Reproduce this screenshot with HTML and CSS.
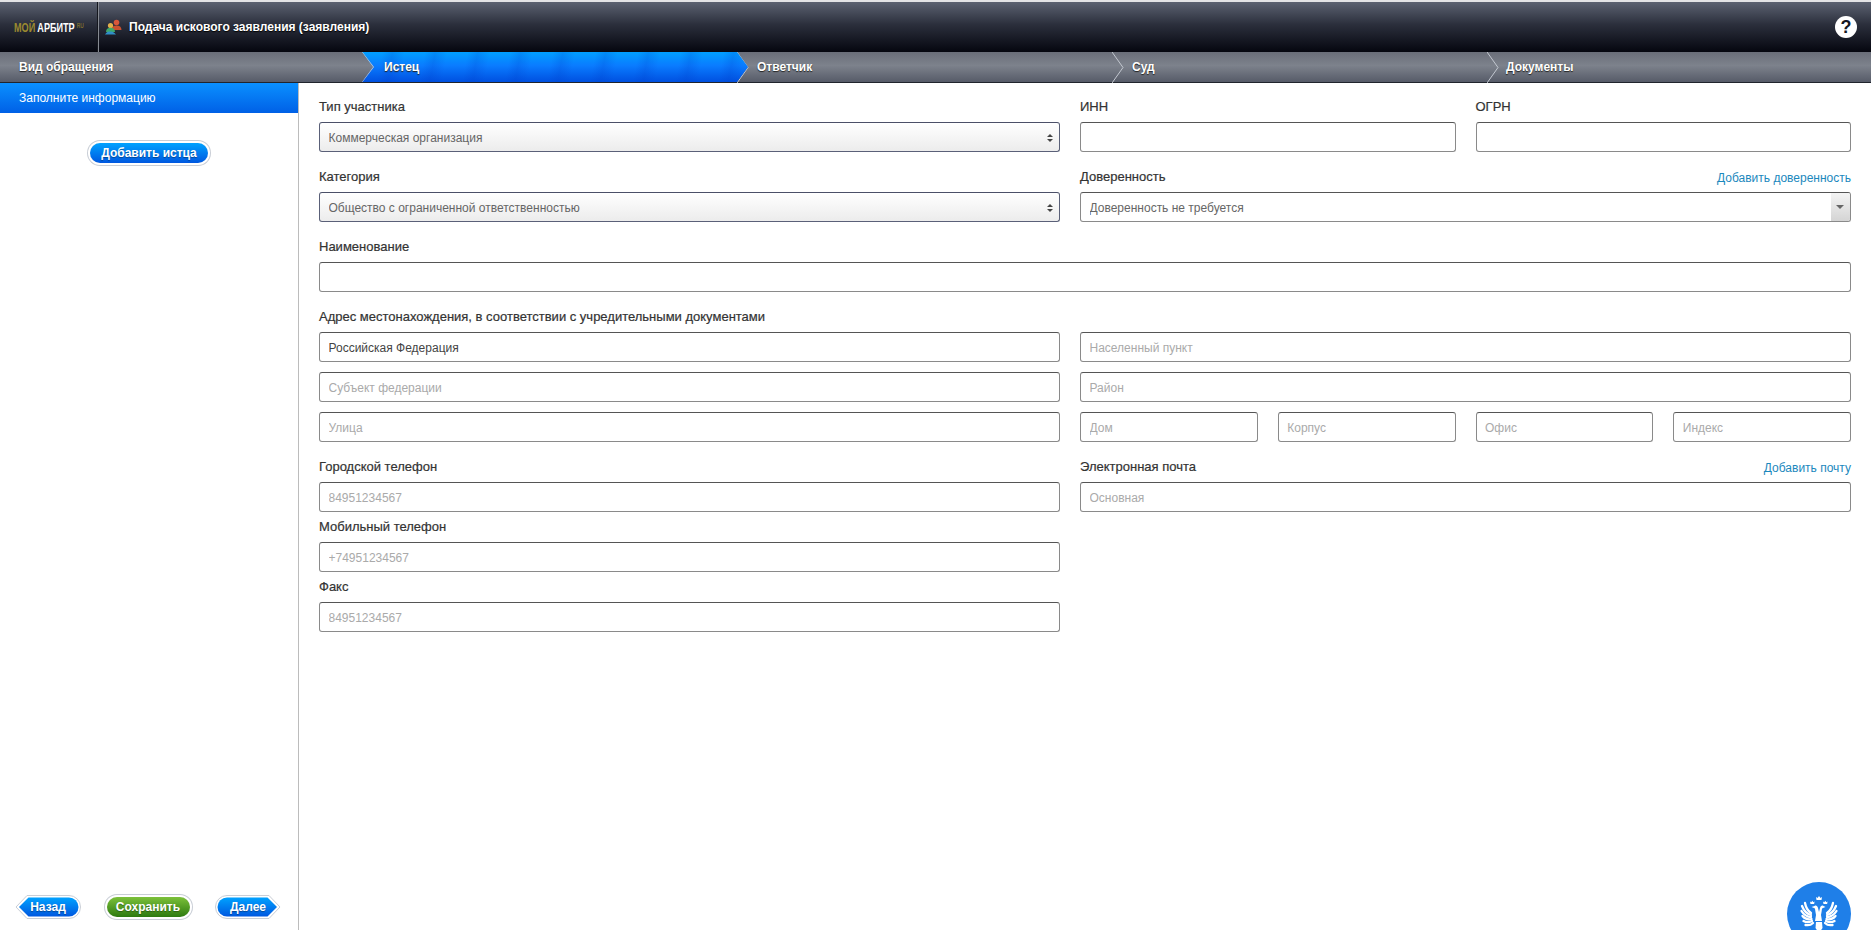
FILE: index.html
```html
<!DOCTYPE html>
<html lang="ru">
<head>
<meta charset="utf-8">
<title>Мой Арбитр</title>
<link rel="stylesheet" href="styles.css">
</head>
<body>
<div class="app">
  <header class="topbar">
    <div class="logo"><div class="logo-text"><span class="logo-gold">МОЙ</span><span class="logo-white">АРБИТР</span><span class="logo-ru">RU</span></div></div>
    <div class="title">
      <svg class="title-icon" width="17" height="16" viewBox="0 0 17 16">
        <circle cx="11.500" cy="3.500" r="2.800" fill="#d9573a"/>
        <path d="M6.500 11c0-3.200 2-4.600 5-4.600s5 1.400 5 4.600z" fill="#c9502f"/>
        <circle cx="5.500" cy="6.500" r="2.600" fill="#e2b04a"/>
        <path d="M1 13c0-2.800 1.800-4.200 4.500-4.200S10 10.200 10 13z" fill="#3fa86a"/>
        <path d="M0 15.500c1.500-2.500 3-3 5-3s4 .5 6 3z" fill="#2f8fc8"/>
      </svg>
      <span>Подача искового заявления (заявления)</span>
    </div>
    <div class="help">?</div>
  </header>

  <nav class="steps">
    <div class="step step-first"><span>Вид обращения</span></div>
    <div class="step step-active">
      <span>Истец</span>
    </div>
    <div class="step">
      <svg class="chevron" width="12" height="31" viewBox="0 0 12 31"><path d="M0 0 L11 15.500 L0 31" fill="none" stroke="#c3c8d0" stroke-width="1"/></svg>
      <span>Ответчик</span>
    </div>
    <div class="step">
      <svg class="chevron" width="12" height="31" viewBox="0 0 12 31"><path d="M0 0 L11 15.500 L0 31" fill="none" stroke="#c3c8d0" stroke-width="1"/></svg>
      <span>Суд</span>
    </div>
    <div class="step step-last">
      <svg class="chevron" width="12" height="31" viewBox="0 0 12 31"><path d="M0 0 L11 15.500 L0 31" fill="none" stroke="#c3c8d0" stroke-width="1"/></svg>
      <span>Документы</span>
    </div>
  </nav>

  <main class="main">
    <aside class="sidebar">
      <div class="side-head">Заполните информацию</div>
      <div class="side-add"><button class="btn btn-blue" type="button">Добавить истца</button></div>
      <div class="side-foot">
        <button class="btn-arrow" type="button">
          <svg class="arrow-bg" width="66" height="26" viewBox="0 0 66 26">
            <defs><linearGradient id="gb1" x1="0" y1="0" x2="0" y2="1"><stop offset="0" stop-color="#00a2ff"/><stop offset="1" stop-color="#0058e0"/></linearGradient></defs>
            <path d="M1 13 L12 1.500 H54 A11.500 11.500 0 0 1 54 24.500 H12 Z" fill="#fff" stroke="#c9ced6"/>
            <path d="M4 13 L13.500 3.500 H54 A9.500 9.500 0 0 1 54 22.500 H13.500 Z" fill="url(#gb1)"/>
          </svg>
          <span>Назад</span>
        </button>
        <button class="btn btn-green" type="button">Сохранить</button>
        <button class="btn-arrow" type="button">
          <svg class="arrow-bg" width="66" height="26" viewBox="0 0 66 26">
            <defs><linearGradient id="gb2" x1="0" y1="0" x2="0" y2="1"><stop offset="0" stop-color="#00a2ff"/><stop offset="1" stop-color="#0058e0"/></linearGradient></defs>
            <path d="M65 13 L54 1.500 H12 A11.500 11.500 0 0 0 12 24.500 H54 Z" fill="#fff" stroke="#c9ced6"/>
            <path d="M62 13 L52.500 3.500 H12 A9.500 9.500 0 0 0 12 22.500 H52.500 Z" fill="url(#gb2)"/>
          </svg>
          <span>Далее</span>
        </button>
      </div>
    </aside>

    <form class="form">
      <div class="row">
        <div class="field">
          <label class="label">Тип участника</label>
          <div class="select-wrap"><select class="control select"><option>Коммерческая организация</option></select></div>
        </div>
        <div class="cols-2">
          <div class="field"><label class="label">ИНН</label><input class="control" type="text"></div>
          <div class="field"><label class="label">ОГРН</label><input class="control" type="text"></div>
        </div>
      </div>

      <div class="row">
        <div class="field">
          <label class="label">Категория</label>
          <div class="select-wrap"><select class="control select"><option>Общество с ограниченной ответственностью</option></select></div>
        </div>
        <div class="field">
          <div class="label-line"><label class="label">Доверенность</label><a class="link">Добавить доверенность</a></div>
          <div class="combo"><input class="control combo-input" type="text" value="Доверенность не требуется"><span class="combo-btn"></span></div>
        </div>
      </div>

      <div class="field">
        <label class="label">Наименование</label>
        <input class="control" type="text">
      </div>

      <div class="address">
        <label class="label">Адрес местонахождения, в соответствии с учредительными документами</label>
        <div class="row">
          <input class="control control-dark" type="text" value="Российская Федерация">
          <input class="control" type="text" placeholder="Населенный пункт">
        </div>
        <div class="row">
          <input class="control" type="text" placeholder="Субъект федерации">
          <input class="control" type="text" placeholder="Район">
        </div>
        <div class="row">
          <input class="control" type="text" placeholder="Улица">
          <div class="cols-4">
            <input class="control" type="text" placeholder="Дом">
            <input class="control" type="text" placeholder="Корпус">
            <input class="control" type="text" placeholder="Офис">
            <input class="control" type="text" placeholder="Индекс">
          </div>
        </div>
      </div>

      <div class="row">
        <div class="phones">
          <div class="field"><label class="label">Городской телефон</label><input class="control" type="text" placeholder="84951234567"></div>
          <div class="field"><label class="label">Мобильный телефон</label><input class="control" type="text" placeholder="+74951234567"></div>
          <div class="field"><label class="label">Факс</label><input class="control" type="text" placeholder="84951234567"></div>
        </div>
        <div class="field field-top">
          <div class="label-line"><label class="label">Электронная почта</label><a class="link">Добавить почту</a></div>
          <input class="control" type="text" placeholder="Основная">
        </div>
      </div>
    </form>
  </main>

  <div class="emblem">
    <svg width="64" height="64" viewBox="0 0 64 64">
      <circle cx="32" cy="32" r="32" fill="#1f7fe8"/>
      <g fill="#fff">
        <path d="M29.500 18l-.5-3 1.500 1 1.500-2 1.500 2 1.500-1-.5 3z"/>
        <path d="M23.500 22l-.5-2.500 1.300.8 1-1.500 1 1.500 1.300-.8-.5 2.500z"/>
        <path d="M36.500 22l-.5-2.500 1.300.8 1-1.500 1 1.500 1.300-.8-.5 2.500z"/>
        <path d="M27.500 24c1.500-1 3 0 3.500 2l1 4 1-4c.5-2 2-3 3.500-2l2 1-2.500 1c-1 .2-1.200 1.500-1.300 3l-.7 4 1 6h-7l1-6-.7-4c-.1-1.500-.3-2.800-1.300-3l-2.500-1z"/>
        <path d="M29 40h6l.5 6-2 3v9h-3v-9l-2-3z"/>
      </g>
      <g fill="none" stroke="#fff" stroke-width="2.300" stroke-linecap="round">
        <path d="M24 31c-3-2-5-5-6-10"/>
        <path d="M24 33c-4-1-7-4-9-9"/>
        <path d="M24 35c-4 0-7-2-9.500-6"/>
        <path d="M24.500 37c-3.500 1-6.500 0-9-3"/>
        <path d="M25 39c-3 1.500-6 1.500-8.500 0"/>
        <path d="M26 41c-2 2-5 2.500-7.500 2"/>
      </g>
      <g fill="none" stroke="#fff" stroke-width="2.300" stroke-linecap="round" transform="matrix(-1 0 0 1 64 0)">
        <path d="M24 31c-3-2-5-5-6-10"/>
        <path d="M24 33c-4-1-7-4-9-9"/>
        <path d="M24 35c-4 0-7-2-9.500-6"/>
        <path d="M24.500 37c-3.500 1-6.500 0-9-3"/>
        <path d="M25 39c-3 1.500-6 1.500-8.500 0"/>
        <path d="M26 41c-2 2-5 2.500-7.500 2"/>
      </g>
    </svg>
  </div>
</div>
</body>
</html>
```
FILE: styles.css
```css
* { box-sizing: border-box; }
html, body { margin: 0; height: 100%; overflow: hidden; }
body { font-family: "Liberation Sans", Arial, sans-serif; font-size: 12px; color: #333; background: #fff; }

.app { position: relative; height: 930px; display: flex; flex-direction: column; overflow: hidden; }

/* Header */
.topbar {
  height: 52px; flex: none; display: flex; align-items: center;
  border-top: 2px solid #e4e4e6;
  background: linear-gradient(#5c6271, #2b2f3c 45%, #05060f);
  color: #fff;
}
.logo {
  width: 99px; height: 100%; flex: none; display: flex; align-items: center; padding-left: 14px;
  border-right: 1px solid #868a92; box-shadow: inset -1px 0 0 #15171e;
}
.logo-text { display: flex; align-items: center; transform: scaleX(.7); transform-origin: left center; font-weight: bold; font-size: 13px; white-space: nowrap; }
.logo-gold { color: #9b8a30; }
.logo-white { color: #fff; margin-left: 3px; }
.logo-ru { color: #7a6c30; font-size: 7px; margin: -4px 0 0 3px; }
.title { display: flex; align-items: center; margin-left: 6px; font-size: 12px; font-weight: bold; text-shadow: 0 1px 1px #000; }
.title-icon { margin-right: 7px; }
.help {
  width: 22px; height: 22px; margin-left: auto; margin-right: 14px; border-radius: 50%;
  background: #fff; color: #15171f; font-size: 18px; font-weight: bold; line-height: 22px; text-align: center;
}

/* Steps */
.steps {
  height: 31px; flex: none; display: flex;
  border-bottom: 1px solid #20242c;
  background: linear-gradient(#6a6e79, #7d828c 45%, #565b68);
  color: #fff; font-size: 12px; font-weight: bold; text-shadow: 0 1px 1px #222;
}
.step { position: relative; width: 375px; flex: none; padding-left: 20px; line-height: 30px; }
.step-first { width: 362px; padding-left: 19px; }
.step-last { flex: 1; padding-left: 19px; }
.step-active {
  padding-left: 22px; z-index: 1;
  width: 386px; margin-right: -11px;
  clip-path: polygon(0 0, 375px 0, 386px 50%, 375px 100%, 0 100%, 11px 50%);
  background:
    repeating-linear-gradient(100deg, rgba(255,255,255,0) 0 20px, rgba(0,60,200,.2) 30px, rgba(255,255,255,0) 42px),
    linear-gradient(#009fff, #0a7cff 45%, #0050e0);
}
.step-active::before {
  content: ""; position: absolute; left: -1px; top: 0; width: 14px; height: 100%; background: #c3c8d0;
  clip-path: polygon(0 0, 1.500px 0, 13px 50%, 1.500px 100%, 0 100%, 11.500px 50%);
}
.chevron { position: absolute; left: 0; top: 0; }

/* Main area */
.main { flex: 1; min-height: 0; display: flex; }
.sidebar { width: 299px; flex: none; display: flex; flex-direction: column; border-right: 1px solid #bcbcbc; }
.side-head {
  height: 30px; padding-left: 19px; line-height: 30px; color: #fff; font-size: 12px;
  background: linear-gradient(#0a90ff, #0060e6);
}
.side-add { margin-top: 28px; display: flex; justify-content: center; }
.side-foot { margin-top: auto; display: flex; justify-content: space-between; padding: 0 17px 10px 15px; align-items: center; }

.btn {
  height: 20px; padding: 0 13px; border: 0; border-radius: 10px; margin: 2px 3px;
  font: bold 12px/20px "Liberation Sans", Arial, sans-serif; color: #fff; text-shadow: 0 1px 1px rgba(0,0,0,.35);
  box-shadow: 0 0 0 2px #fff, 0 0 0 3px #c9ced6;
}
.btn-blue { width: 118px; padding: 0; background: linear-gradient(#00a2ff, #0058e0); }
.btn-green { width: 83px; padding: 0; background: linear-gradient(#7cc13a, #2d7a10); }
.btn-arrow {
  position: relative; width: 66px; height: 26px; padding: 0; border: 0; background: none;
  font: bold 12px/26px "Liberation Sans", Arial, sans-serif; color: #fff; text-shadow: 0 1px 1px rgba(0,0,0,.35);
}
.btn-arrow span { position: relative; }
.arrow-bg { position: absolute; left: 0; top: 0; }

/* Form */
.form { flex: 1; min-width: 0; padding: 16px 20px 0; display: flex; flex-direction: column; gap: 17px; }
.row { display: grid; grid-template-columns: 741fr 771fr; column-gap: 20px; }
.cols-2 { display: grid; grid-template-columns: 1fr 1fr; column-gap: 20px; }
.cols-4 { display: grid; grid-template-columns: repeat(4, 1fr); column-gap: 20px; }
.field { display: flex; flex-direction: column; gap: 7px; min-width: 0; }
.address { display: flex; flex-direction: column; gap: 7px; }
.address .row + .row { margin-top: 3px; }
.phones { display: flex; flex-direction: column; gap: 7px; }
.field-top { align-self: start; }

.label { display: block; height: 16px; font-size: 13px; line-height: 16px; color: #333; font-weight: normal; -webkit-text-stroke: .2px #333; }
.label-line { height: 16px; display: flex; justify-content: space-between; align-items: flex-start; }
.link { font-size: 12px; line-height: 18px; color: #1b88bd; }

.control {
  display: block; width: 100%; height: 30px; padding: 1px 8px 0 8.500px; margin: 0;
  border: 1px solid #8a8a8a; border-top-color: #555; border-radius: 3px;
  background: #fff; outline: 0;
  font: 12px "Liberation Sans", Arial, sans-serif; color: #666;
}
.control-dark { color: #444; }
.control::placeholder { color: #aaa; opacity: 1; }

.select-wrap { position: relative; }
.select {
  appearance: none; -webkit-appearance: none;
  border-color: #5a6078; border-top-color: #4b5068;
  background: linear-gradient(#fff, #ececec);
}
.select-wrap::before, .select-wrap::after {
  content: ""; position: absolute; right: 7px; width: 0; height: 0;
  border-left: 3px solid transparent; border-right: 3px solid transparent;
}
.select-wrap::before { top: 12px; border-bottom: 3px solid #444; }
.select-wrap::after { top: 17px; border-top: 3px solid #444; }

.combo { position: relative; }
.combo-input { padding-right: 24px; }
.combo-btn {
  position: absolute; right: 1px; top: 1px; bottom: 1px; width: 19px;
  background: linear-gradient(#f4f4f4, #d4d4d4); border-radius: 0 2px 2px 0;
}
.combo-btn::after {
  content: ""; position: absolute; left: 5px; top: 12px; width: 0; height: 0;
  border-left: 4px solid transparent; border-right: 4px solid transparent; border-top: 4px solid #666;
}

.emblem { position: absolute; left: 1787px; top: 882px; width: 64px; height: 64px; }
.emblem svg { display: block; }
```
